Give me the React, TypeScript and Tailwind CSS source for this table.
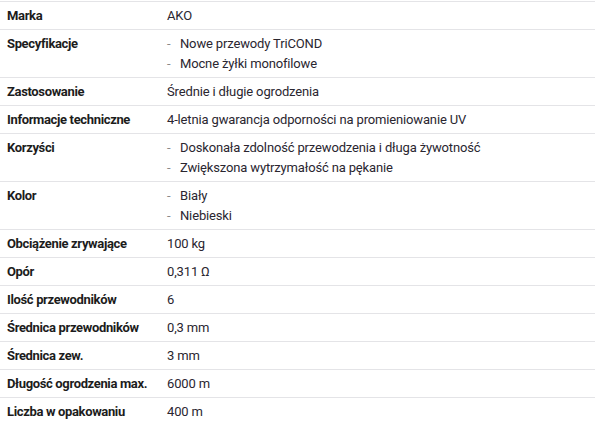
const rows: { label: string; value: string | string[] }[] = [
  { label: "Marka", value: "AKO" },
  { label: "Specyfikacje", value: ["Nowe przewody TriCOND", "Mocne żyłki monofilowe"] },
  { label: "Zastosowanie", value: "Średnie i długie ogrodzenia" },
  { label: "Informacje techniczne", value: "4-letnia gwarancja odporności na promieniowanie UV" },
  {
    label: "Korzyści",
    value: ["Doskonała zdolność przewodzenia i długa żywotność", "Zwiększona wytrzymałość na pękanie"],
  },
  { label: "Kolor", value: ["Biały", "Niebieski"] },
  { label: "Obciążenie zrywające", value: "100 kg" },
  { label: "Opór", value: "0,311 Ω" },
  { label: "Ilość przewodników", value: "6" },
  { label: "Średnica przewodników", value: "0,3 mm" },
  { label: "Średnica zew.", value: "3 mm" },
  { label: "Długość ogrodzenia max.", value: "6000 m" },
  { label: "Liczba w opakowaniu", value: "400 m" },
];

export default function App() {
  return (
    <div className="w-[595px] h-[437px] bg-white pt-px font-['Roboto',sans-serif] text-[13px] leading-[20px]">
      {rows.map((row) => (
        <div key={row.label} className="flex border-t border-[#e4e4e7] pt-[4px] pb-[3px]">
          <div className="w-[167px] shrink-0 pl-[7px] font-bold tracking-[-0.35px] text-[#1c1c1c]">
            {row.label}
          </div>
          {Array.isArray(row.value) ? (
            <ul className="flex flex-col">
              {row.value.map((v) => (
                <li key={v} className="flex text-[#2a2630] tracking-[-0.15px]">
                  <span className="w-[13px] text-[#8a8a8a]">-</span>
                  <span>{v}</span>
                </li>
              ))}
            </ul>
          ) : (
            <div className="text-[#2a2630] tracking-[-0.15px]">{row.value}</div>
          )}
        </div>
      ))}
    </div>
  );
}
